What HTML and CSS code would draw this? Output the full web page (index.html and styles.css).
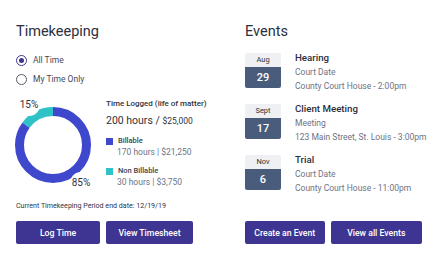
FILE: index.html
```html
<!DOCTYPE html>
<html lang="en">
<head>
  <meta charset="UTF-8" />
  <meta name="viewport" content="width=device-width, initial-scale=1.0" />
  <title>Matter Dashboard</title>
  <link rel="stylesheet" href="styles.css">
</head>
<body>
  <div class="page">
    <section class="panel">
      <h2>Timekeeping</h2>
      <div class="radios">
        <label class="radio"><span class="dot checked"></span>All Time</label>
        <label class="radio"><span class="dot"></span>My Time Only</label>
      </div>

      <div class="chart-row">
        <div class="chart">
          <svg width="80" height="80" viewBox="0 0 80 80">
            <!-- billable 85%, non billable 15%, starting at 12 o'clock -->
            <circle cx="40" cy="40" r="33.5" fill="none" stroke="#3f48cc" stroke-width="9"
              stroke-dasharray="178.9 210.5" transform="rotate(-90 40 40)" />
            <circle cx="40" cy="40" r="33.5" fill="none" stroke="#2fc2c8" stroke-width="9"
              stroke-dasharray="31.6 210.5" stroke-dashoffset="-178.9" transform="rotate(-90 40 40)" />
          </svg>
          <span class="pct pct-small">15%</span>
          <span class="pct pct-big">85%</span>
        </div>
        <div class="summary">
          <div class="summary-label">Time Logged (life of matter)</div>
          <div class="summary-total">200 hours / <small>$25,000</small></div>
          <div class="legend">
            <div class="legend-name"><span class="swatch billable"></span>Billable</div>
            <div class="legend-value">170 hours | $21,250</div>
          </div>
          <div class="legend">
            <div class="legend-name"><span class="swatch non-billable"></span>Non Billable</div>
            <div class="legend-value">30 hours | $3,750</div>
          </div>
        </div>
      </div>

      <p class="period">Current Timekeeping Period end date: 12/19/19</p>
      <div class="actions">
        <button class="btn btn-log">Log Time</button>
        <button class="btn btn-sheet">View Timesheet</button>
      </div>
    </section>

    <section class="panel">
      <h2>Events</h2>
      <ul class="events">
        <li class="event">
          <div class="date"><span class="month">Aug</span><span class="day">29</span></div>
          <div class="event-info">
            <div class="event-title">Hearing</div>
            <div class="event-line">Court Date</div>
            <div class="event-line">County Court House - 2:00pm</div>
          </div>
        </li>
        <li class="event">
          <div class="date"><span class="month">Sept</span><span class="day">17</span></div>
          <div class="event-info">
            <div class="event-title">Client Meeting</div>
            <div class="event-line">Meeting</div>
            <div class="event-line">123 Main Street, St. Louis - 3:00pm</div>
          </div>
        </li>
        <li class="event">
          <div class="date"><span class="month">Nov</span><span class="day">6</span></div>
          <div class="event-info">
            <div class="event-title">Trial</div>
            <div class="event-line">Court Date</div>
            <div class="event-line">County Court House - 11:00pm</div>
          </div>
        </li>
      </ul>
      <div class="actions">
        <button class="btn btn-create">Create an Event</button>
        <button class="btn btn-all">View all Events</button>
      </div>
    </section>
  </div>
</body>
</html>
```

FILE: styles.css
```css
/* Dashboard cards: timekeeping + events */
body {
  margin: 0;
  background: #fff;
  font-family: Roboto, 'Liberation Sans', sans-serif;
  color: #2f3342;
}
.page {
  display: grid;
  grid-template-columns: 205px 177px;
  column-gap: 24px;
  padding: 22px 0 0 16px;
}
.panel {
  display: flex;
  flex-direction: column;
}
h2 {
  margin: 0;
  font-size: 14.5px;
  line-height: 20px;
  font-weight: 400;
  color: #2b2f3c;
}

/* radios */
.radios {
  margin-top: 13px;
  display: flex;
  flex-direction: column;
  gap: 8px;
}
.radio {
  display: flex;
  align-items: center;
  font-size: 8.5px;
  line-height: 11px;
  color: #444a5a;
}
.dot {
  box-sizing: border-box;
  width: 11px;
  height: 11px;
  border: 1px solid #555a68;
  border-radius: 50%;
  margin-right: 6px;
  position: relative;
}
.dot.checked {
  border-color: #3f358f;
}
.dot.checked::after {
  content: '';
  position: absolute;
  left: 2px;
  top: 2px;
  width: 5px;
  height: 5px;
  border-radius: 50%;
  background: #3f358f;
}

/* chart */
.chart-row {
  display: flex;
  margin-top: 14px;
}
.chart {
  position: relative;
  flex: 0 0 90px;
  padding-top: 6px;
}
.chart svg {
  display: block;
  margin-left: -3px;
}
.pct {
  position: absolute;
  font-size: 10px;
  color: #2f3342;
  background: #fff;
  border-radius: 50%;
  width: 22px;
  height: 22px;
  line-height: 22px;
  text-align: center;
}
.pct-small {
  left: 2px;
  top: -5px;
}
.pct-big {
  left: 54px;
  top: 73px;
}
.summary {
  white-space: nowrap;
}
.summary-label {
  font-size: 8px;
  font-weight: 500;
  line-height: 10px;
}
.summary-total {
  margin-top: 6px;
  font-size: 10.5px;
  line-height: 12px;
}
.summary-total small {
  font-size: 8.5px;
}
.legend {
  margin-top: 9px;
}
.legend + .legend {
  margin-top: 8px;
}
.legend-name {
  display: flex;
  align-items: center;
  font-size: 7.5px;
  font-weight: 500;
  line-height: 10px;
  color: #3a3f4e;
}
.swatch {
  width: 7px;
  height: 7px;
  margin-right: 5px;
}
.swatch.billable {
  background: #3f48cc;
}
.swatch.non-billable {
  background: #2fc2c8;
}
.legend-value {
  margin: 1px 0 0 11px;
  font-size: 8.5px;
  line-height: 11px;
  color: #6d7386;
}

.period {
  margin: 13px 0 0;
  font-size: 7.1px;
  line-height: 10px;
  color: #2f3342;
}

/* buttons */
.actions {
  display: flex;
  gap: 6px;
  margin-top: 10px;
}
.btn {
  height: 23px;
  border: none;
  border-radius: 2px;
  background: #3e3592;
  color: #fff;
  font-family: inherit;
  font-size: 8.7px;
  font-weight: 500;
  padding: 0;
}
.btn-log { width: 84px; }
.btn-sheet { width: 87px; }
.btn-create { width: 80px; }
.btn-all { width: 92px; }

/* events */
.events {
  list-style: none;
  margin: 11px 0 0;
  padding: 0;
  display: flex;
  flex-direction: column;
  gap: 11px;
}
.event {
  display: flex;
  align-items: flex-start;
  gap: 14px;
}
.date {
  flex: 0 0 36px;
  display: flex;
  flex-direction: column;
  text-align: center;
}
.month {
  height: 14px;
  line-height: 14px;
  font-size: 7.5px;
  background: #eef0f4;
  border-radius: 2px 2px 0 0;
  color: #333;
}
.day {
  height: 21px;
  line-height: 21px;
  font-size: 11px;
  font-weight: 500;
  background: #4a5c7c;
  color: #fff;
  border-radius: 0 0 2px 2px;
}
.event-info {
  margin-top: -2px;
  white-space: nowrap;
}
.event-title {
  font-size: 9.7px;
  font-weight: 500;
  line-height: 14px;
  color: #2b2f3c;
}
.event-line {
  font-size: 8.5px;
  line-height: 14px;
  color: #6d7386;
}
.panel:last-child .actions {
  margin-top: auto;
}
```
